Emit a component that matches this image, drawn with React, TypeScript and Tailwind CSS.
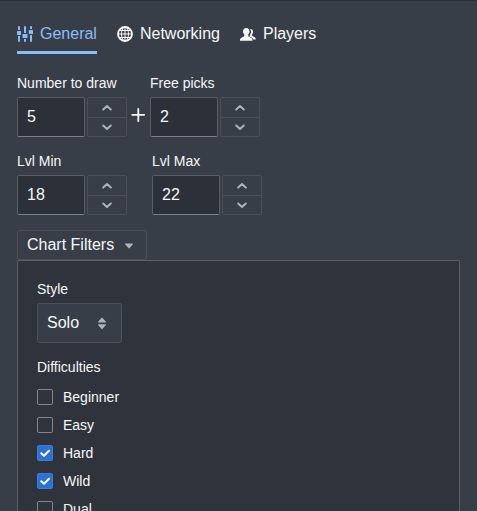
import type { ReactNode } from "react";

function SettingsIcon() {
  return (
    <svg width="16" height="16" viewBox="0 0 16 16" fill="currentColor">
      <path d="M1 1a1 1 0 012 0v3H1V1zm0 9h2v5a1 1 0 01-2 0v-5zM7 1a1 1 0 012 0v6H7V1zm0 12h2v2a1 1 0 01-2 0v-2zM13 1a1 1 0 012 0v2h-2V1zm0 8h2v6a1 1 0 01-2 0V9z" />
      <rect x="0" y="5" width="4" height="4" rx=".5" />
      <rect x="5.500" y="8" width="5" height="4" rx=".5" />
      <rect x="11.800" y="4" width="4.200" height="4" rx=".5" />
    </svg>
  );
}

function GlobeIcon() {
  return (
    <svg width="16" height="16" viewBox="0 0 16 16" fill="none" stroke="currentColor">
      <circle cx="8" cy="8" r="7" strokeWidth="1.800" />
      <ellipse cx="8" cy="8" rx="3.500" ry="7" strokeWidth="1" />
      <path d="M8 1v14M1 8h14M2 4.500h12M2 11.500h12" strokeWidth="1" />
    </svg>
  );
}

function PeopleIcon() {
  return (
    <svg width="16" height="16" viewBox="0 0 16 16" fill="currentColor">
      <path d="M6.300 2c2 0 3.200 1.300 3.100 3.300.4.300.3 1.100-.2 1.500-.2.800-.6 1.400-1 1.800v1.300c.6 1.200 4.300 1.500 4.300 3.800v1.100H0v-1.100c0-2.300 3.700-2.600 4.300-3.800V8.600c-.5-.4-.8-1-1-1.800-.5-.4-.6-1.200-.2-1.500C3 3.300 4.200 2 6.300 2z" />
      <path d="M10 3.100c1.900-.2 3 .8 2.900 2.500.4.300.3 1-.1 1.300-.2.700-.5 1.200-.9 1.500v1.100c.5 1.100 3.800 1.300 3.800 3.300v.7h-2.200c-.5-1.600-2.500-2.100-3.900-2.900 0-.5 0-1 .1-1.400.5-.5.700-1 .9-1.700.7-.7.800-1.700.3-2.500 0-.7-.3-1.400-.9-1.900z" />
    </svg>
  );
}

function Tab({ icon, label, active = false }: { icon: ReactNode; label: string; active?: boolean }) {
  return (
    <div className={`flex h-[34px] items-center gap-[7px] border-b-[3px] pb-[3px] text-base leading-[28px] ${active ? "border-[#8abbff] text-[#8abbff]" : "border-transparent"}`}>
      {icon}
      <span>{label}</span>
    </div>
  );
}

function Chevron({ up = false }: { up?: boolean }) {
  return (
    <svg className="mr-px" width="16" height="16" viewBox="0 0 16 16" fill="none" stroke="#abb3bf" strokeWidth="2" strokeLinecap="round" strokeLinejoin="round">
      <path d={up ? "M4.200 9.500l3.800-3.400 3.800 3.400" : "M4.200 6.500l3.800 3.400 3.800-3.400"} />
    </svg>
  );
}

function NumberField({ label, value }: { label: string; value: number }) {
  return (
    <div className="w-[110px]">
      <div className="h-[23px] whitespace-nowrap text-sm leading-[18px]">{label}</div>
      <div className="flex gap-[2px]">
        <div className="h-10 w-[68px] rounded-[2px] border border-[#595e66] border-b-[#7b7f86] bg-[#2c3038] pl-[9px] text-base leading-[38px]">{value}</div>
        <div className="flex h-10 w-10 flex-col rounded-[2px] border border-[#4b5059]">
          <div className="flex h-5 items-center justify-center border-b border-[#4b5059]"><Chevron up /></div>
          <div className="flex h-[18px] items-center justify-center"><Chevron /></div>
        </div>
      </div>
    </div>
  );
}

function Checkbox({ label, checked = false }: { label: string; checked?: boolean }) {
  return (
    <div className="flex h-4 items-center gap-[10px] text-sm leading-4">
      <div className={`size-4 shrink-0 rounded-[2px] border ${checked ? "border-[#3c7dd6] bg-[#2d72d2]" : "border-[#7f8792]"}`}>
        {checked && (
          <svg width="14" height="14" viewBox="1 1 14 14" fill="none" stroke="#fff" strokeWidth="2" strokeLinecap="round" strokeLinejoin="round">
            <path d="M4.200 8.200l2.800 2.600 5-5" />
          </svg>
        )}
      </div>
      <span>{label}</span>
    </div>
  );
}

const difficulties = [
  { label: "Beginner", checked: false },
  { label: "Easy", checked: false },
  { label: "Hard", checked: true },
  { label: "Wild", checked: true },
  { label: "Dual", checked: false },
];

export default function App() {
  return (
    <div className="h-[511px] w-[477px] overflow-hidden border-t border-[#2b2f37] bg-[#383e47] px-[17px] pt-[19px] font-['Liberation_Sans',Arial,sans-serif] text-[#f6f7f9]">
      <div className="flex gap-5">
        <Tab icon={<SettingsIcon />} label="General" active />
        <Tab icon={<GlobeIcon />} label="Networking" />
        <Tab icon={<PeopleIcon />} label="Players" />
      </div>
      <div className="mt-5 flex">
        <NumberField label="Number to draw" value={5} />
        <div className="flex w-[23px] pl-[4px] pt-[34px]">
          <svg width="14" height="14" viewBox="0 0 14 14" stroke="currentColor" strokeWidth="1.800" strokeLinecap="round">
            <path d="M7.300 1v12M1.200 6.800h12" />
          </svg>
        </div>
        <NumberField label="Free picks" value={2} />
      </div>
      <div className="mt-[15px] flex gap-[25px]">
        <NumberField label="Lvl Min" value={18} />
        <NumberField label="Lvl Max" value={22} />
      </div>
      <div className="mt-[15px] flex h-[30px] w-[130px] items-center rounded-[2px] border border-[#4b5059] pl-[9px] text-base">
        <span>Chart Filters</span>
        <svg className="ml-[7px]" width="16" height="16" viewBox="0 0 16 16" fill="#abb3bf">
          <path d="M4.500 6.500h7a.5.5 0 01.4.8l-3.500 4a.5.5 0 01-.8 0l-3.500-4a.5.5 0 01.4-.8z" />
        </svg>
      </div>
      <div className="h-[270px] w-[443px] rounded-[2px] border border-[#5a5e67] bg-[#2f343c] px-[19px] pt-[19px]">
        <div className="h-[23px] text-sm leading-[18px]">Style</div>
        <div className="flex h-10 w-[85px] items-center rounded-[2px] border border-[#4b5059] bg-[#383e47] pl-[9px] text-base">
          <span>Solo</span>
          <svg className="ml-[15px]" width="16" height="16" viewBox="0 0 16 16" fill="#abb3bf">
            <path d="M4.500 7.500h7a.5.5 0 00.4-.8l-3.500-4a.5.5 0 00-.8 0l-3.500 4a.5.5 0 00.4.8zM4.500 9.200h7a.5.5 0 01.4.8l-3.500 4a.5.5 0 01-.8 0l-3.500-4a.5.5 0 01.4-.8z" />
          </svg>
        </div>
        <div className="mt-[15px] h-[31px] text-sm leading-[18px]">Difficulties</div>
        <div className="flex flex-col gap-3">
          {difficulties.map((item) => (
            <Checkbox key={item.label} label={item.label} checked={item.checked} />
          ))}
        </div>
      </div>
    </div>
  );
}
